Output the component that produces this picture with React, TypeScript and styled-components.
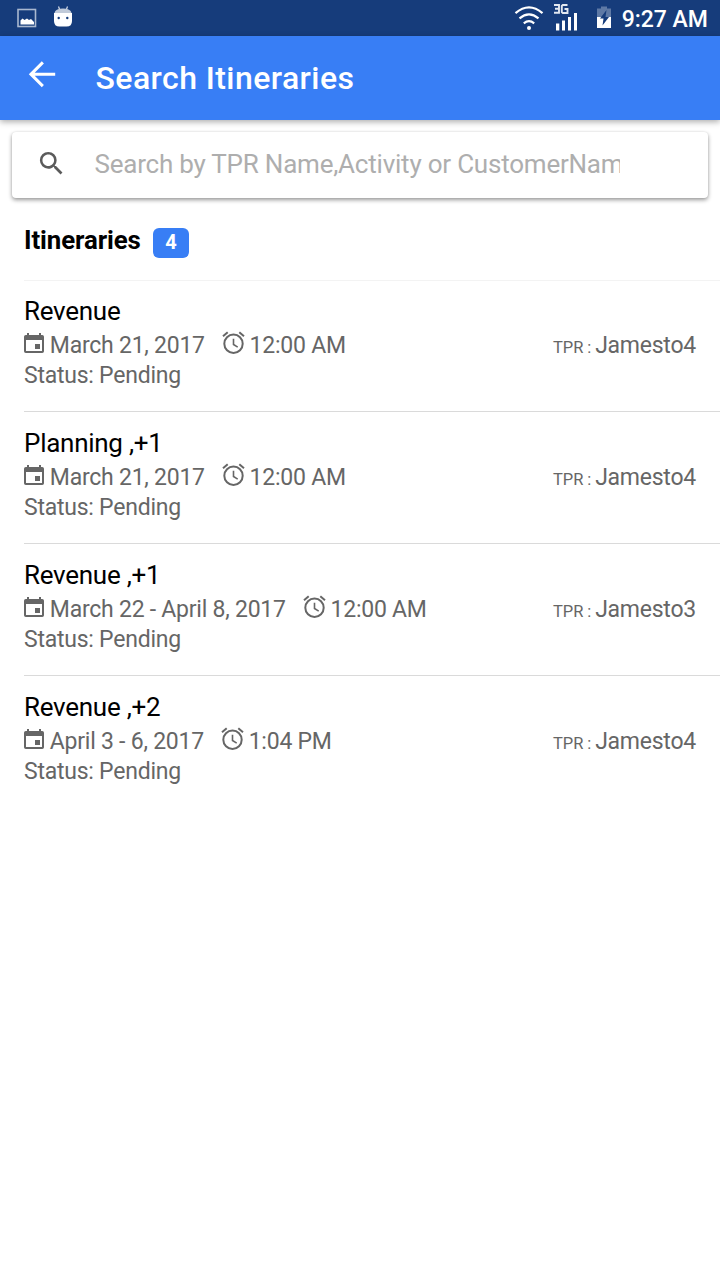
import React from "react";
import styled, { createGlobalStyle } from "styled-components";

const GlobalStyle = createGlobalStyle`
  * { box-sizing: border-box; }
  body { margin: 0; background: #fff; font-family: Roboto, sans-serif; color: #000; }
`;

const Screen = styled.div`
  width: 720px;
  min-height: 1280px;
  background: #fff;
  overflow: hidden;
`;

const StatusBar = styled.div`
  height: 36px;
  background: #163c7b;
  color: #fff;
  display: flex;
  align-items: center;
  justify-content: space-between;
  padding: 0 12px 0 16px;
`;

const Notifications = styled.div`
  display: flex;
  height: 36px;
  gap: 14px;
`;

const Indicators = styled.div`
  display: flex;
  height: 36px;
`;

const Clock = styled.span`
  font-size: 23px;
  font-weight: 500;
  line-height: 39px;
  margin-left: 10px;
  white-space: nowrap;
`;

const Toolbar = styled.header`
  height: 84px;
  background: #387ef5;
  display: flex;
  padding-left: 24px;
  position: relative;
  box-shadow: 0 2px 6px rgba(0, 0, 0, 0.32);
`;

const BackIcon = styled.svg`
  width: 36px;
  height: 36px;
  margin-top: 20px;
  fill: #fff;
`;

const Title = styled.h1`
  margin: 0 0 0 35.5px;
  font-size: 32px;
  font-weight: 500;
  letter-spacing: 0.43px;
  line-height: 84px;
  color: #fff;
`;

const SearchBox = styled.div`
  margin: 12px 12px 0;
  height: 66px;
  border-radius: 4px;
  background: #fff;
  box-shadow: 0 2px 4px rgba(0, 0, 0, 0.4), 0 0 2px rgba(0, 0, 0, 0.08);
  display: flex;
`;

const SearchIcon = styled.svg`
  width: 31px;
  height: 31px;
  margin: 16px 0 0 24px;
  fill: #5b5b5b;
`;

const Placeholder = styled.div`
  width: 525px;
  margin-left: 27.5px;
  font-size: 26px;
  letter-spacing: -0.22px;
  line-height: 65px;
  color: #aeaeae;
  overflow: hidden;
  white-space: nowrap;
`;

const ListHeader = styled.div`
  margin-left: 24px;
  height: 83px;
  border-bottom: 1px solid #f3f3f3;
  display: flex;
  align-items: flex-start;
`;

const ListTitle = styled.h2`
  margin: 27px 0 0;
  font-size: 25.8px;
  font-weight: 700;
  line-height: 30px;
  width: 129px;
  letter-spacing: -0.1px;
`;

const Badge = styled.span`
  margin-top: 30px;
  width: 36px;
  height: 30px;
  border-radius: 6px;
  background: #387ef5;
  color: #fff;
  font-size: 20px;
  font-weight: 700;
  line-height: 29px;
  text-align: center;
`;

const List = styled.main`
  margin: -1px 0 0 24px;
`;

const Item = styled.article<{ $last?: boolean }>`
  height: 132px;
  padding: 15px 24px 0 0;
  border-bottom: 1px solid ${(p) => (p.$last ? "transparent" : "#dadada")};
  color: #666;
  font-size: 23px;
  letter-spacing: -0.24px;
`;

const ItemTitle = styled.h3`
  margin: 0;
  font-size: 26px;
  font-weight: 400;
  letter-spacing: -0.27px;
  line-height: 32px;
  color: #000;
`;

const Details = styled.div`
  display: flex;
  height: 32px;
  line-height: 38px;
  white-space: nowrap;
`;

const CalendarIcon = styled.svg`
  width: 20px;
  height: 21px;
  margin: 5px 5.8px 0 0;
  fill: #666;
`;

const AlarmIcon = styled.svg`
  width: 23px;
  height: 23px;
  margin: 4px 5px 0 16.8px;
  fill: none;
  stroke: #666;
`;

const Owner = styled.span`
  margin-left: auto;
`;

const OwnerLabel = styled.small`
  font-size: 16.5px;
  letter-spacing: -0.1px;
`;

const Status = styled.div`
  line-height: 34px;
`;

interface Itinerary {
  name: string;
  date: string;
  time: string;
  tpr: string;
}

const itineraries: Itinerary[] = [
  { name: "Revenue", date: "March 21, 2017", time: "12:00 AM", tpr: "Jamesto4" },
  { name: "Planning ,+1", date: "March 21, 2017", time: "12:00 AM", tpr: "Jamesto4" },
  { name: "Revenue ,+1", date: "March 22 - April 8, 2017", time: "12:00 AM", tpr: "Jamesto3" },
  { name: "Revenue ,+2", date: "April 3 - 6, 2017", time: "1:04 PM", tpr: "Jamesto4" },
];

const StatusIcons = () => (
  <Notifications>
    <svg width="22" height="36" viewBox="0 0 22 36">
      <rect x="2" y="9.5" width="17.5" height="17" fill="none" stroke="#a9b8d0" strokeWidth="1.6" />
      <path d="M4.500 24.500v-4l2-2 2 1.500 2.500-1.500 2 1.500 2-1 3 3v2.500z" fill="#fff" />
    </svg>
    <svg width="22" height="36" viewBox="0 0 22 36">
      <path d="M6.500 6.500l1.500 4M15.500 6.500l-1.500 4" stroke="#d5dce8" strokeWidth="1.200" />
      <path d="M2.500 13q.7-4.500 8.500-4.500t8.500 4.500z" fill="#c0cad9" />
      <path d="M2 13h18v8q0 5.500-5.500 5.500h-7q-5.500 0-5.500-5.500z" fill="#fff" />
      <circle cx="6.700" cy="18" r="1.200" fill="#163c7b" />
      <circle cx="15.300" cy="18" r="1.200" fill="#163c7b" />
    </svg>
  </Notifications>
);

const SystemIcons = () => (
  <svg width="98" height="36" viewBox="514 0 98 36">
    <g fill="none" stroke="#fff" strokeWidth="2.200">
      <path d="M515.500 13.200q13.500-11.500 27 0" />
      <path d="M519.500 18.300q9.500-8 19 0" />
      <path d="M523.800 23.300q5.200-4.200 10.400 0" />
    </g>
    <circle cx="529" cy="28" r="2" fill="#fff" />
    <g fill="none" stroke="#e2e8f1" strokeWidth="1.900">
      <path d="M554 5h5v7.800h-5M555 8.800h4" />
      <path d="M567.500 5h-4.700l-1 1v6l1 1h4.700v-4h-3" />
    </g>
    <path d="M556 23.500h3.300v7H556zM562 20.500h3v10h-3zM568 17h3v13.500h-3zM574 13h3v17.500h-3z" fill="#fff" />
    <path d="M597 8.500h4v-2h6v2h4v8.500h-14z" fill="#5e79a5" />
    <path d="M597 17h14v11h-14z" fill="#fff" />
    <path d="M606.500 10l-6.500 8.500h3.500l-1 7 6.500-8.500h-3.500z" fill="#163c7b" />
  </svg>
);

export default function App() {
  return (
    <Screen>
      <GlobalStyle />
      <StatusBar>
        <StatusIcons />
        <Indicators>
          <SystemIcons />
          <Clock>9:27 AM</Clock>
        </Indicators>
      </StatusBar>
      <Toolbar>
        <BackIcon viewBox="0 0 36 36">
          <path d="M31.200 16.800H10.700l9.200-9.300L17.800 5.300 4.800 18.300l13 13 2.100-2.200-9.200-9.300h20.500z" />
        </BackIcon>
        <Title>Search Itineraries</Title>
      </Toolbar>
      <SearchBox>
        <SearchIcon viewBox="0 0 24 24">
          <path d="M15.500 14h-.79l-.28-.27A6.471 6.471 0 0 0 16 9.500 6.500 6.500 0 1 0 9.500 16c1.610 0 3.090-.59 4.230-1.570l.27.28v.79l5 4.990L20.490 19l-4.990-5zm-6 0C7.010 14 5 11.990 5 9.500S7.010 5 9.500 5 14 7.010 14 9.500 11.990 14 9.500 14z" />
        </SearchIcon>
        <Placeholder>Search by TPR Name,Activity or CustomerName</Placeholder>
      </SearchBox>
      <ListHeader>
        <ListTitle>Itineraries</ListTitle>
        <Badge>4</Badge>
      </ListHeader>
      <List>
        {itineraries.map((item, index) => (
          <Item key={index} $last={index === itineraries.length - 1}>
            <ItemTitle>{item.name}</ItemTitle>
            <Details>
              <CalendarIcon viewBox="0 -0.5 20 21">
                <path
                  fillRule="evenodd"
                  d="M3 .5h2v2h10v-2h2v2h1.200q1.800 0 1.800 1.800v14.400q0 1.800-1.800 1.800H1.800Q0 20.500 0 18.700V4.300Q0 2.500 1.800 2.500H3zM2 7.500v11h16v-11zM11 11.500h5v5h-5z"
                />
              </CalendarIcon>
              <span>{item.date}</span>
              <AlarmIcon viewBox="0 -0.3 23 23">
                <circle cx="11.500" cy="12.500" r="9.200" strokeWidth="2" />
                <path d="M1 5L5.700 1M22 5L17.300 1" strokeWidth="2" />
                <path d="M11.500 7.500v5.700l4.200 2.600" strokeWidth="1.600" />
              </AlarmIcon>
              <span>{item.time}</span>
              <Owner>
                <OwnerLabel>TPR : </OwnerLabel>
                {item.tpr}
              </Owner>
            </Details>
            <Status>Status: Pending</Status>
          </Item>
        ))}
      </List>
    </Screen>
  );
}
